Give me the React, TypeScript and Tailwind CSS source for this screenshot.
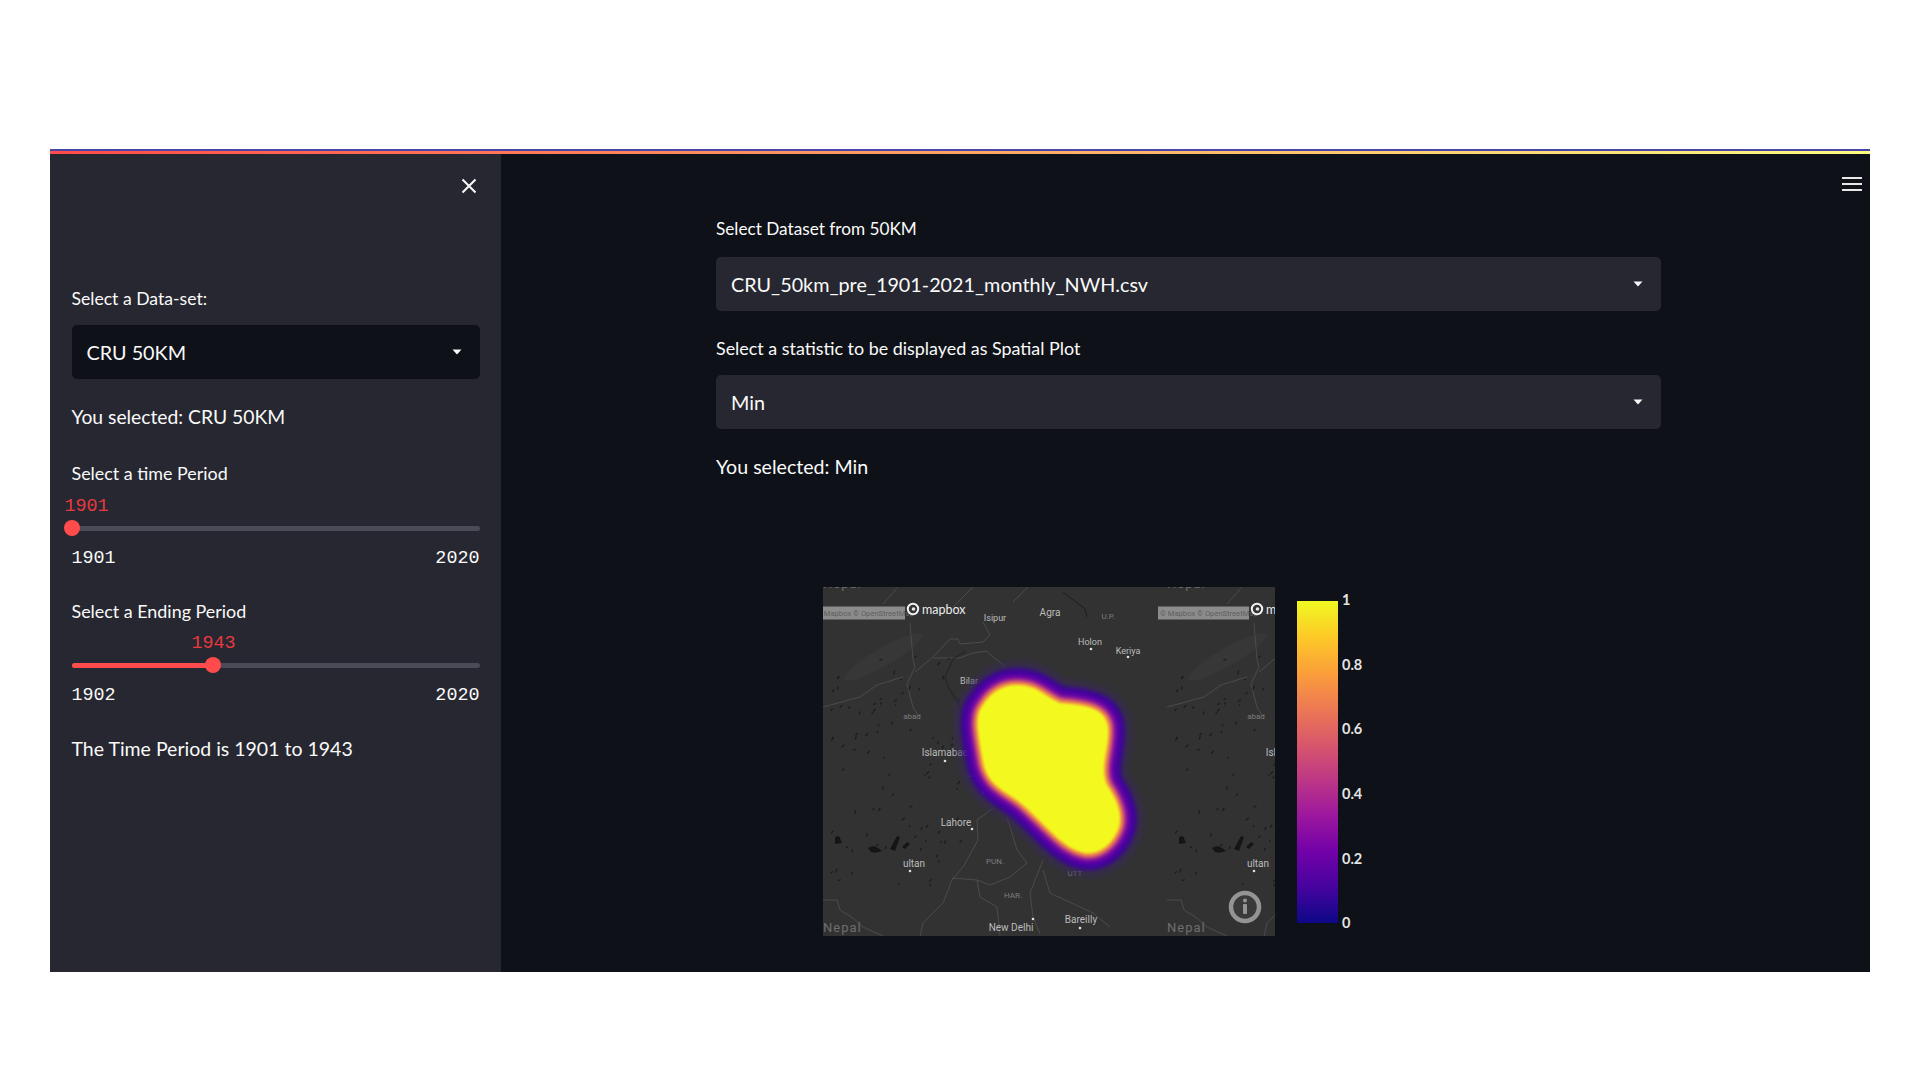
import React from "react";

const SANS = "font-['Lato','Noto_Sans',sans-serif]";
const MONO = "font-['Liberation_Mono',monospace]";

function Caret() {
  return (
    <svg width="10" height="6" viewBox="0 0 10 6" className="shrink-0">
      <path d="M0.5 0.5h9L5 5.5z" fill="#fafafa" />
    </svg>
  );
}

function Select({ value, dark }: { value: string; dark?: boolean }) {
  return (
    <div className={`flex h-[54px] items-center justify-between rounded-[5px] pl-[15px] pr-[18px] text-[19.8px] text-[#fafafa] ${dark ? "bg-[#0e1117]" : "bg-[#262730]"}`}>
      <span className="pt-[2px]">{value}</span>
      <Caret />
    </div>
  );
}

function Slider({ value, pct, valueLeft, min, max, filled }: { value: string; pct: number; valueLeft: number; min: string; max: string; filled?: boolean }) {
  return (
    <div className="flex flex-col">
      <div className="relative h-5">
        <span className={`absolute top-0 text-[18.4px] leading-[22px] text-[#e8393f] ${MONO}`} style={{ left: valueLeft }}>{value}</span>
      </div>
      <div className="relative mt-1 flex h-4 items-center">
        <div className="h-[5px] w-full rounded-full bg-[#4a4b57]" />
        {filled && <div className="absolute left-0 h-[5px] rounded-full bg-[#ff4b4b]" style={{ width: `${pct}%` }} />}
        <div className="absolute h-4 w-4 -translate-x-1/2 rounded-full bg-[#ff4b4b]" style={{ left: `${pct}%` }} />
      </div>
      <div className={`mt-3 flex h-5 justify-between text-[18.4px] leading-[22px] text-[#fafafa] ${MONO}`}>
        <span>{min}</span>
        <span>{max}</span>
      </div>
    </div>
  );
}

const BLOB = "M194 98 C215 98 222 110 237 116 C255 118 282 118 285 140 C287 160 276 180 284 198 C292 210 300 225 296 240 C290 258 275 268 262 266 C240 262 225 240 200 218 C185 205 165 200 160 175 C156 150 150 130 160 118 C168 105 180 98 194 98 Z";

const LAND = [
  "M87 36 L90 73 L92 80 L84 97 L90 120 L96 130",
  "M92 85 L110 70 L127 52 L135 52 L137 57 L160 55 L167 48 L160 35",
  "M110 71 L137 71 L150 66 L163 64 L184 81",
  "M0 120 L37 110 L54 98 L80 90",
  "M170 221 L154 233 L155 253 L140 280 L129 293 L120 316 L100 336 L97 349",
  "M129 291 L154 293 L167 298 L187 290 L204 276 L194 263 L184 230",
  "M154 293 L157 310 L174 320 L177 349",
  "M220 273 L207 306 L210 330 L217 347",
  "M220 283 L227 306 L270 326 L287 340",
  "M0 313 L14 313 L17 323 L30 331 L40 340 L60 349",
  "M60 17 L75 0",
  "M130 20 L150 0",
  "M190 15 L205 0",
];

const LABELS: [string, number, number, number][] = [
  ["Agra", 227, 29, 10],
  ["Isipur", 172, 34, 9],
  ["U.P.", 285, 32, 8],
  ["Holon", 267, 58, 9],
  ["Keriya", 305, 67, 9],
  ["Bilar", 146, 97, 9],
  ["abad", 89, 132, 8],
  ["Islamabad", 122, 169, 10],
  ["Lahore", 133, 239, 10],
  ["ultan", 91, 280, 10],
  ["PUN.", 172, 277, 8],
  ["HAR.", 190, 311, 8],
  ["New Delhi", 188, 344, 10],
  ["Bareilly", 258, 336, 10],
  ["UTT", 252, 289, 8],
  ["Jo.", 151, 190, 8],
];

const DOTS: [number, number][] = [
  [268, 62], [305, 70], [122, 174], [149, 242], [87, 284], [257, 341], [210, 332], [160, 205],
];

function lakes() {
  const out: [number, number, number, number][] = [];
  let s = 17;
  const r = () => {
    s = (s * 1103515245 + 12345) & 0x7fffffff;
    return s / 0x7fffffff;
  };
  for (let i = 0; i < 85; i++) {
    out.push([r() * 135 + 2, 70 + r() * 235, r() * 2.2, -0.5 - r() * 2.2]);
  }
  return out;
}

function MapPlot() {
  const L = lakes();
  return (
    <svg width="452" height="349" viewBox="0 0 452 349" className="block shrink-0 bg-[#323232]">
      <g id="tile">
        <ellipse cx="60" cy="70" rx="45" ry="9" fill="#3a3a3a" opacity="0.6" transform="rotate(-30 60 70)" />
        {LAND.map((d, i) => (
          <path key={i} d={d} fill="none" stroke="#5c5c5c" strokeWidth="0.6" />
        ))}
        <path d="M143 64 L130 72 L122 90 L125 100 L135 115 L142 135" fill="none" stroke="#272727" strokeWidth="1.4" />
        <path d="M240 5 L262 22 L264 30" fill="none" stroke="#1c1c1c" strokeWidth="0.9" />
        {L.map(([x, y, dx, dy], i) => (
          <path key={i} d={`M${x.toFixed(1)} ${y.toFixed(1)} l${dx.toFixed(1)} ${dy.toFixed(1)}`} stroke="#1b1b1b" strokeWidth="1.2" strokeLinecap="round" />
        ))}
        <path d="M45 261 q4 -3 8 -1 q4 2 6 4 q-7 3 -11 1 z" fill="#151515" />
        <path d="M67 262 l7 -13 l3 1 l-5 14 z" fill="#151515" />
        <path d="M79 260 l5 -5 l3 2 l-5 5 z" fill="#151515" />
        <path d="M12 250 l4 -1 l3 7 l-7 1 z" fill="#151515" />
        <rect x="-9" y="19.5" width="91" height="13" fill="#8c8c8c" />
        <text x="-7" y="29" fontSize="7.6" fill="#5e5e5e" fontFamily="Roboto, sans-serif">© Mapbox © OpenStreetMap</text>
        <circle cx="90" cy="22" r="5.2" fill="#333" stroke="#f2f2f2" strokeWidth="2" />
        <circle cx="90.5" cy="22" r="1.8" fill="#e8e8e8" />
        <text x="99" y="26.5" fontSize="12.5" fill="#ececec" fontFamily="Lato, sans-serif">mapbox</text>
        {LABELS.map(([t, x, y, f]) => (
          <text key={t} x={x} y={y} fontSize={f} textAnchor="middle" fill={f === 8 ? "#7e7e7e" : "#bdbdbd"} fontFamily="Roboto, sans-serif">{t}</text>
        ))}
        {DOTS.map(([x, y], i) => (
          <circle key={i} cx={x} cy={y} r="1.3" fill="#dedede" />
        ))}
        <text x="0" y="345" fontSize="13" fill="#6e6e6e" letterSpacing="1" fontFamily="Roboto, sans-serif">Nepal</text>
        <text x="0" y="1" fontSize="13" fill="#6e6e6e" letterSpacing="1" fontFamily="Roboto, sans-serif">Nepal</text>
      </g>
      <use href="#tile" x="344" />
      <use href="#tile" x="-344" />
      <g className="blur-[2px]" strokeLinejoin="round" fill="none">
        <path d={BLOB} stroke="#3a2a5a" strokeOpacity="0.5" strokeWidth="50" />
        <path d={BLOB} stroke="#3b049a" strokeWidth="34" />
        <path d={BLOB} stroke="#5c01a6" strokeWidth="24" />
        <path d={BLOB} stroke="#9c179e" strokeWidth="14" />
        <path d={BLOB} stroke="#e16462" strokeWidth="9" />
        <path d={BLOB} stroke="#fca636" strokeWidth="5" />
      </g>
      <path d={BLOB} fill="#f3f91f" className="blur-[1px]" />
      <circle cx="422" cy="320" r="14" fill="#3a3a3a" stroke="#949494" strokeWidth="4.5" />
      <circle cx="422" cy="313.5" r="2" fill="#949494" />
      <rect x="420" y="317" width="4" height="10" rx="1" fill="#949494" />
    </svg>
  );
}

export default function App() {
  return (
    <div className={`flex h-[1080px] w-full flex-col bg-white px-[50px] pt-[149px] ${SANS}`}>
      <div className="flex h-[823px] w-full flex-col blur-[0.35px]">
        <div className="h-[1.5px] bg-[#4a46a8]" />
        <div className="h-[3.5px] bg-[linear-gradient(90deg,#ff4b4b,#fffd80)]" />
        <div className="flex min-h-0 flex-1">
          <aside className="flex w-[451px] shrink-0 flex-col bg-[#262730] px-[21.5px] text-[#fafafa]">
            <div className="mt-[25px] flex h-[14px] justify-end pr-[3px]">
              <svg width="16" height="16" viewBox="0 0 16 16" className="-mt-px">
                <path d="M1.5 1.5L14.5 14.5M14.5 1.5L1.5 14.5" stroke="#fafafa" strokeWidth="2" />
              </svg>
            </div>
            <label className="mt-[96px] text-[17.6px] leading-5">Select a Data-set:</label>
            <div className="mt-4"><Select value="CRU 50KM" dark /></div>
            <p className="mt-6 text-[19.3px] leading-7">You selected: CRU 50KM</p>
            <label className="mt-8 text-[17.9px] leading-5">Select a time Period</label>
            <div className="mt-[13px]">
              <Slider value="1901" pct={0} valueLeft={-7} min="1901" max="2020" />
            </div>
            <label className="mt-[33px] text-[17.9px] leading-5">Select a Ending Period</label>
            <div className="mt-3">
              <Slider value="1943" pct={34.8} valueLeft={120} min="1902" max="2020" filled />
            </div>
            <p className="mt-[30px] text-[19.5px] leading-7">The Time Period is 1901 to 1943</p>
          </aside>
          <main className="relative min-w-0 flex-1 bg-[#0e1117] text-[#fafafa]">
            <button className="absolute right-[8px] top-[23px] flex w-5 flex-col gap-1">
              <span className="h-[2px] w-full bg-[#e8e8e8]" />
              <span className="h-[2px] w-full bg-[#e8e8e8]" />
              <span className="h-[2px] w-full bg-[#e8e8e8]" />
            </button>
            <div className="ml-[215px] w-[945px] pt-[65px]">
              <label className="block text-[17.2px] leading-5">Select Dataset from 50KM</label>
              <div className="mt-[18px]"><Select value="CRU_50km_pre_1901-2021_monthly_NWH.csv" /></div>
              <label className="mt-[27px] block pb-px text-[17.9px] leading-5">Select a statistic to be displayed as Spatial Plot</label>
              <div className="mt-4"><Select value="Min" /></div>
              <p className="mt-[24px] -mb-px text-[19.6px] leading-7">You selected: Min</p>
            </div>
            <div className="ml-[322px] mt-[107px] flex items-start">
              <MapPlot />
              <div className="ml-[22px] mt-[14px] h-[322px] w-[41px] bg-[linear-gradient(to_top,#0d0887,#46039f,#7201a8,#9c179e,#bd3786,#d8576b,#ed7953,#fb9f3a,#fdca26,#f0f921)]" />
              <div className="ml-[4px] mt-[14px] flex h-[322px] flex-col justify-between text-[14.5px] font-bold leading-none text-[#e4e4e4]">
                <span className="-mt-[8px]">1</span>
                <span>0.8</span>
                <span>0.6</span>
                <span>0.4</span>
                <span>0.2</span>
                <span className="-mb-[8px]">0</span>
              </div>
            </div>
          </main>
        </div>
      </div>
    </div>
  );
}
